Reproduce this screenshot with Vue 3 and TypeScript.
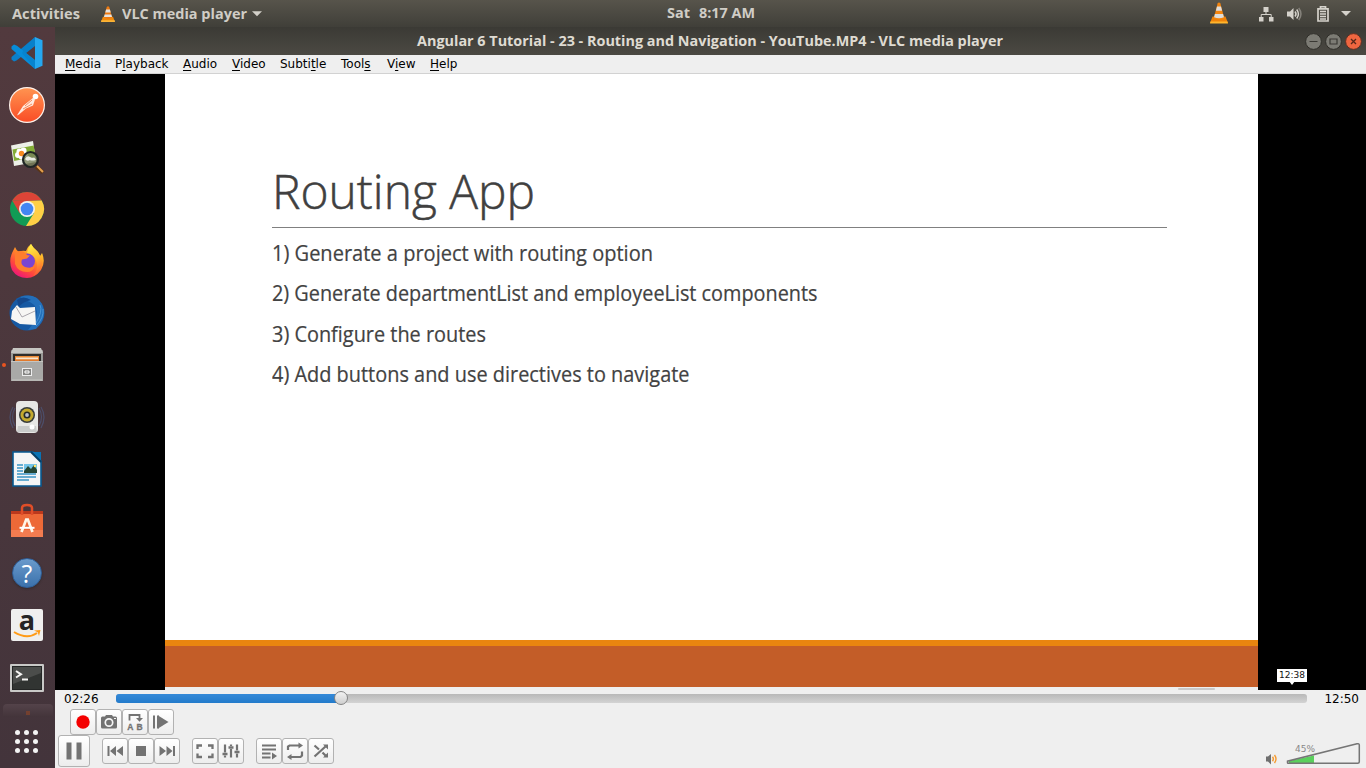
<script setup lang="ts">
interface MenuEntry { pre: string; key: string; post: string; width: number }

const menus: MenuEntry[] = [
  { pre: '', key: 'M', post: 'edia', width: 50 },
  { pre: 'P', key: 'l', post: 'ayback', width: 68 },
  { pre: '', key: 'A', post: 'udio', width: 49 },
  { pre: '', key: 'V', post: 'ideo', width: 48 },
  { pre: 'Subti', key: 't', post: 'le', width: 61 },
  { pre: 'Tool', key: 's', post: '', width: 46 },
  { pre: 'V', key: 'i', post: 'ew', width: 43 },
  { pre: '', key: 'H', post: 'elp', width: 40 },
]

const steps = [
  { text: '1) Generate a project with routing option', width: 381 },
  { text: '2) Generate departmentList and employeeList components', width: 545.5 },
  { text: '3) Configure the routes', width: 214 },
  { text: '4) Add buttons and use directives to navigate', width: 417.5 },
]

const progress = 18.9
const appDots = [0, 1, 2, 3, 4, 5, 6, 7, 8]
</script>

<template>
  <div class="desktop">
    <header class="topbar">
      <svg class="activities" width="70" height="27"><text x="0" y="19" textLength="68" lengthAdjust="spacingAndGlyphs">Activities</text></svg>
      <svg class="cone-small" viewBox="0 0 18 18" width="14" height="16" preserveAspectRatio="none">
        <path d="M2.5 12h13l2.3 5.5H.2z" fill="#f08a0c" /><path d="M.4 16h17.2l.4 2H0z" fill="#fbb436" />
        <path d="M7.4 1Q9-.5 10.6 1L14.4 13Q9 16 3.6 13z" fill="#ee7a10" />
        <path d="M6.5 4h5l1 3.2H5.5zM4.7 9.7h8.6l.9 2.7H3.8z" fill="#e4e2df" />
      </svg>
      <svg class="app-name" width="142" height="27"><text x="0" y="19" textLength="125" lengthAdjust="spacingAndGlyphs">VLC media player</text><path d="M130 11.3h10l-5 5z" fill="#d3d0c9" /></svg>
      <svg class="clock" width="90" height="27"><text x="0" y="18" textLength="23" lengthAdjust="spacingAndGlyphs">Sat</text><text x="32" y="18" textLength="56" lengthAdjust="spacingAndGlyphs">8:17 AM</text></svg>
      <svg class="tray-cone" viewBox="0 0 18 22" width="18" height="22">
        <path d="M2.5 14.5h13l2.5 6.5H0z" fill="#ef8209" /><path d="M.5 19.5h17l.5 2H0z" fill="#ffb52d" />
        <path d="M7.7 1Q9-.2 10.3 1L14.2 16Q9 19 3.8 16z" fill="#f5850f" />
        <path d="M7 4.5h4l1.1 4.2H5.900zM4.900 12h8.200l.8 3.200Q9 17.500 4.100 15.200z" fill="#dedddb" />
      </svg>
      <svg class="net" width="16" height="16" viewBox="0 0 16 16"><path d="M5.500 1h5v5h-5zM1 11h4.500v4.500H1zM11 11h4.500v4.500H11z" fill="#d5d2cb" /><path d="M8 6v2.500M3.200 11V8.500h10V11" fill="none" stroke="#d5d2cb" /></svg>
      <svg class="sound" width="17" height="16" viewBox="0 0 17 16"><path d="M1 5.500h3L7.500 2v12L4 10.500H1z" fill="#d5d2cb" /><path d="M9 5.500q2 2.500 0 5M10.700 3.500q3.500 4.500 0 9" fill="none" stroke="#d5d2cb" stroke-width="1.500" /><path d="M12.700 2q4.500 6 0 12" fill="none" stroke="#85827b" stroke-width="1.500" /></svg>
      <svg class="battery" width="12" height="16" viewBox="0 0 12 16"><path d="M3.500 2.500V.7h5v1.800M1 2.800h10V15H1z" fill="none" stroke="#d5d2cb" stroke-width="1.700" /><path d="M3 5.500h6M3 8h6M3 10.500h6M3 13h6" stroke="#d5d2cb" stroke-width="1.300" /></svg>
      <svg class="caret" width="10" height="5"><path d="M0 0h10L5 5z" fill="#d5d2cb" /></svg>
    </header>

    <div class="workspace">
      <nav class="dock">
        <div class="dock-item">
          <svg width="36" height="36" viewBox="0 0 36 36"><path d="M26 2v9L7.500 25.500 5 26.500l-2.500-2V22z" fill="#0a7fca" /><path d="M2.500 11.500L5 9.500l3 1.200L26 25v9L2.500 14z" fill="#078cd9" /><path d="M26 2l7.500 3.300v25.400L26 34V2z" fill="#25a8f0" /><path d="M26 10.500V2L17 11l-4 7 13 16v-8.500L16.500 18z" fill="#0780ca" opacity=".7" /></svg>
        </div>
        <div class="dock-item">
          <svg width="38" height="38" viewBox="0 0 38 38"><circle cx="19" cy="19" r="18" fill="#fff3ec" /><circle cx="19" cy="19" r="16.800" fill="url(#postman)" /><circle cx="27.500" cy="10.500" r="2.800" fill="#fff" /><path d="M25.500 11.500L15 20 9.800 28 9 29.500l2-1 7-6 7-3 2-6z" fill="#ffe9dd" /><path d="M17 20l7-6m-9 9l9-5" stroke="#f68a5c" fill="none" /><defs><linearGradient id="postman" x2="0" y2="1"><stop stop-color="#ff9350" /><stop offset="1" stop-color="#fa4d26" /></linearGradient></defs></svg>
        </div>
        <div class="dock-item">
          <svg width="36" height="36" viewBox="0 0 36 36"><path d="M2 6.500L24 2l3 21L5 27z" fill="#edf0e8" /><path d="M3.500 10.500L24.700 6.500l1.800 11L5.200 22z" fill="#83ac35" /><g fill="#fff"><circle cx="10.500" cy="12.500" r="3" /><circle cx="14.500" cy="11.500" r="3" /><circle cx="16" cy="15.500" r="3" /><circle cx="12.500" cy="17.500" r="3" /><circle cx="9" cy="16" r="3" /></g><circle cx="12.500" cy="14.500" r="2.700" fill="#f58b21" /><path d="M27 27.500l7 6" stroke="#5b3414" stroke-width="4" /><path d="M28 27l6 6" stroke="#e4a14f" stroke-width="2" /><circle cx="21.500" cy="20.500" r="7.500" fill="#77825b" fill-opacity=".8" stroke="#202624" stroke-width="2.200" /><path d="M16 20q2-4 5-2l2 1q3-1 4 2-5 1-6 0-3 2-5-1z" fill="#ebeee5" /></svg>
        </div>
        <div class="dock-item">
          <svg width="36" height="36" viewBox="0 0 36 36"><circle cx="18" cy="18" r="17" fill="#119b55" /><path d="M3.300 9.500A17 17 0 0 1 32.700 9.500L18 10z" fill="#dc4437" /><path d="M32.700 9.500A17 17 0 0 1 17 35l8-13-7-12z" fill="#ffcf46" /><path d="M3.300 9.500L10.500 22 18 18V9.500z" fill="#dc4437" /><circle cx="18" cy="18" r="8" fill="#f1f1ef" /><circle cx="18" cy="18" r="6.300" fill="#4286f3" /></svg>
        </div>
        <div class="dock-item">
          <svg width="36" height="36" viewBox="0 0 36 36"><defs><linearGradient id="fox" x1=".9" y1="0" x2=".3" y2="1"><stop stop-color="#fff136" /><stop offset=".4" stop-color="#ff9925" /><stop offset=".75" stop-color="#ff463d" /><stop offset="1" stop-color="#ed167b" /></linearGradient><linearGradient id="mane" x1=".3" y1="0" x2=".5" y2="1"><stop stop-color="#fff04a" /><stop offset=".5" stop-color="#ffb52c" /><stop offset="1" stop-color="#ff5a35" /></linearGradient></defs><path d="M4 8q1-2 2-4 1 3 4 5 3-2 7-1 1-4 5-7 2 4 4 5 4 3 5 7l2-3q4 9-1 17Q26 35 18 35 8 35 3 27-1 17 4 8z" fill="url(#fox)" /><circle cx="18.500" cy="18" r="7.500" fill="#7a45d0" /><path d="M6 9q8-3 11 2 1 1.500 4 1.500l-3 3-5 1q-2 5 3 7.500 6 2 10-1-2 6-8 6-9 0-12-8z" fill="#ff7d2d" /><path d="M22 1q3 5 6 7 4 4 5 12-1 9-9 13 5-6 4-12-1-6-5-9-3-2-5-2 1-5 4-9z" fill="url(#mane)" /></svg>
        </div>
        <div class="dock-item">
          <svg width="38" height="38" viewBox="0 0 38 38"><circle cx="19" cy="19" r="17.500" fill="#1659a3" /><path d="M12 3Q27-2 34 10q6 14-6 25l-8 1q8-9 9-18-1-9-12-12z" fill="#236fba" /><path d="M9 6q6-5 14 0-9 2-12 7z" fill="#14488c" /><path d="M4 17l5-6 3 3 15-1 1 18-16-1-9-5z" fill="#f6f6f4" /><path d="M8 13l6 10 13-6" fill="none" stroke="#aaa7ad" /><path d="M32 11q3 6-4 18m7-14q1 9-7 17" stroke="#5aa4de" fill="none" stroke-width=".7" /></svg>
        </div>
        <div class="dock-item">
          <i class="running-dot"></i>
          <svg width="36" height="36" viewBox="0 0 36 36"><rect x="2" y="3" width="32" height="31" rx="1" fill="#9b9b98" /><path d="M4 1h28l2 5H2z" fill="#c6c6c2" /><rect x="4" y="7" width="28" height="10" fill="#302e2b" /><path d="M6 9h24v6H6z" fill="#eb8a35" /><path d="M7 10.500h22v2H7z" fill="#f6e5cd" /><path d="M6 12.500h24v3H6z" fill="#e17a2d" /><rect x="2" y="14" width="32" height="20" fill="#a9a9a7" /><path d="M2 14.500h32M3 33h30" stroke="#c5c5c1" /><rect x="13.500" y="21.500" width="9" height="7" fill="#858583" stroke="#eee" /><path d="M16 24h4v2h-4z" fill="none" stroke="#fff" /></svg>
        </div>
        <div class="dock-item">
          <svg width="38" height="36" viewBox="0 0 38 36"><path d="M5 8q-6 10 0 21M33 8q6 10 0 21M7 9q-5 9 0 18m24-18q5 9 0 18" fill="none" stroke="#4e5e87" stroke-width="1.200" opacity=".6" /><rect x="8" y="2" width="22" height="32" rx="4" fill="#e7e7e5" /><path d="M10 27h18l1 6H9z" fill="#c9cbca" /><circle cx="19" cy="16" r="8" fill="#363b3a" /><circle cx="19" cy="16" r="6.500" fill="#c4a92e" /><circle cx="19" cy="16" r="3.500" fill="#252925" /><circle cx="19" cy="16" r="1.900" fill="#bcbfca" /><circle cx="24" cy="28" r="2.500" fill="#fff" /></svg>
        </div>
        <div class="dock-item">
          <svg width="36" height="38" viewBox="0 0 36 38"><path d="M4 2h20l8 9v25H4z" fill="#f4f5f5" stroke="#075a91" stroke-width="1.600" /><path d="M22 2h10v9z" fill="#0873b4" /><path d="M22 2l10 10" stroke="#053f67" stroke-width="2" /><path d="M8 15h6M8 18h6M8 21h6M8 24h19M8 27h19M8 30h12" stroke="#3995c5" stroke-width="1.600" /><path d="M15 14h13v9H15z" fill="#73c4e8" /><path d="M15 21l4-5 3 3 3-4 3 5v3H15z" fill="#244634" /><circle cx="26" cy="16" r="1.300" fill="#ffe465" /></svg>
        </div>
        <div class="dock-item">
          <svg width="36" height="36" viewBox="0 0 36 36"><path d="M2 8h32v26H2z" fill="#ed6937" /><path d="M2 8h32v3H2z" fill="#bc391d" /><path d="M2 27h32v7H2z" fill="#f37c50" /><path d="M13 12V5q0-3 5-3t5 3v7" fill="none" stroke="#e04e28" stroke-width="2.500" /><path d="M12.500 29L17.200 16.500h1.600L23.500 29" fill="none" stroke="#fff6e7" stroke-width="2.700" /><path d="M10.500 24.800h15" stroke="#fff" stroke-width="2" /></svg>
        </div>
        <div class="dock-item"><div class="help-ball">?</div></div>
        <div class="dock-item">
          <svg class="amazon" width="32" height="32" viewBox="0 0 32 32"><rect width="32" height="32" rx="2" fill="#efefee" /><text class="amazon-a" x="16" y="20.500" text-anchor="middle">a</text><path d="M3 23q13 8 23 1" fill="none" stroke="#ff9b16" stroke-width="2" /><path d="M23 21.500l6.500-.5-1.500 6-1.300-3.700z" fill="#ff9b16" /></svg>
        </div>
        <div class="dock-item">
          <svg class="terminal" width="36" height="32" viewBox="0 0 36 32"><rect x="1" y="2" width="34" height="28" rx="1" fill="#c9c9c7" /><rect x="3.500" y="4.500" width="29" height="23" fill="#313432" stroke="#242625" /><path d="M4 5h28v6L4 22z" fill="#606260" opacity=".55" /><path d="M7 9l5 3.300L7 15.500M13 17.500h6" fill="none" stroke="#f5f5f3" stroke-width="2" /></svg>
        </div>
        <div class="dock-peek"><i></i></div>
        <div class="app-grid"><i v-for="dot in appDots" :key="dot"></i></div>
      </nav>

      <main class="window">
        <div class="titlebar">
          <svg class="window-title" width="590" height="28"><text x="1" y="19" textLength="586" lengthAdjust="spacingAndGlyphs">Angular 6 Tutorial - 23 - Routing and Navigation - YouTube.MP4 - VLC media player</text></svg>
          <div class="window-buttons">
            <svg width="17" height="17" viewBox="0 0 17 17"><circle cx="8.500" cy="8.500" r="7.900" fill="#7c7b74" stroke="#302f2a" /><path d="M4.500 8.500h8" stroke="#3a3934" /></svg>
            <svg width="17" height="17" viewBox="0 0 17 17"><circle cx="8.500" cy="8.500" r="7.900" fill="#7c7b74" stroke="#302f2a" /><path d="M5 6h7v5H5z" fill="none" stroke="#3a3934" stroke-width="1.200" /></svg>
            <svg width="17" height="17" viewBox="0 0 17 17"><circle cx="8.500" cy="8.500" r="7.900" fill="#ef6640" stroke="#5c3024" /><path d="M6 6l5 5m0-5l-5 5" fill="none" stroke="#562719" stroke-width="1.300" /></svg>
          </div>
        </div>

        <div class="menubar">
          <span v-for="m in menus" :key="m.pre + m.key + m.post" :style="{ width: m.width + 'px' }">{{ m.pre }}<u>{{ m.key }}</u>{{ m.post }}</span>
        </div>

        <section class="video">
          <article class="slide">
            <svg class="slide-title" width="270" height="64"><text x="-1" y="48" textLength="263" lengthAdjust="spacingAndGlyphs">Routing App</text></svg>
            <hr class="rule">
            <div class="steps">
              <svg v-for="s in steps" :key="s.text" width="600" height="40.400"><text x="0" y="27" :textLength="s.width" lengthAdjust="spacingAndGlyphs">{{ s.text }}</text></svg>
            </div>
            <div class="slide-accent"></div>
            <div class="slide-base"></div>
            <div class="slide-edge"><i></i></div>
          </article>
          <div class="time-tip">12:38</div>
        </section>

        <footer class="controls">
          <div class="seek-row">
            <span class="elapsed">02:26</span>
            <div class="track"><div class="played" :style="{ width: progress + '%' }"></div><i class="knob" :style="{ left: progress + '%' }"></i></div>
            <span class="total">12:50</span>
          </div>
          <div class="advanced-row">
            <button><svg viewBox="0 0 26 26"><circle cx="13" cy="13" r="6.700" fill="#f40000" /></svg></button>
            <button><svg viewBox="0 0 26 26"><path d="M5 9q0-1.500 1.500-1.500H9L10 6h6l1 1.500h2.500Q21 7.500 21 9v9q0 1.500-1.500 1.500h-13Q5 19.500 5 18z" fill="#737373" /><circle cx="13" cy="13.500" r="3.700" fill="#737373" stroke="#f6f6f6" stroke-width="1.700" /><path d="M18 9h2v1h-2z" fill="#f6f6f6" /></svg></button>
            <button><svg viewBox="0 0 26 26"><path d="M7.500 11.500V6h10v4" fill="none" stroke="#737373" stroke-width="1.800" /><path d="M14 9h7l-3.500 3.800z" fill="#737373" /><text x="5.300" y="21" class="ab">A</text><text x="14.500" y="21" class="ab">B</text></svg></button>
            <button><svg viewBox="0 0 26 26"><path d="M5 6.500h2v13H5zM9 6.500h2v13H9z" fill="#737373" /><path d="M10 6.500l10.500 6.500L10 19.500z" fill="#737373" /></svg></button>
          </div>
          <div class="main-row">
            <button class="pause"><svg viewBox="0 0 32 32"><path d="M8.500 7.500h5v17h-5zM18.500 7.500h5v17h-5z" fill="#737373" /></svg></button>
            <div class="group">
              <button><svg viewBox="0 0 26 26"><path d="M5.500 8h2v10h-2zM14 8v10l-6-5zM21 8v10l-6.500-5z" fill="#737373" /></svg></button>
              <button><svg viewBox="0 0 26 26"><path d="M8 8h10v10H8z" fill="#737373" /></svg></button>
              <button><svg viewBox="0 0 26 26"><path d="M21 8h-2v10h2zM12.500 8v10l6-5zM5.500 8v10l6.500-5z" fill="#737373" /></svg></button>
            </div>
            <div class="group">
              <button><svg viewBox="0 0 26 26"><path d="M5.500 11V7.500H10M16 7.500h4.500V11M20.500 15.500V19H16M10 19H5.500v-3.500" fill="none" stroke="#737373" stroke-width="2.300" /></svg></button>
              <button><svg viewBox="0 0 26 26"><path d="M7 6.500v8m0 3v2M13 6.500v1.500m0 3v8.500M19 6.500v6m0 3v4" stroke="#737373" stroke-width="2.200" /><path d="M4.500 16h5M10.500 9.500h5M16.500 14h5" stroke="#737373" stroke-width="2.600" /></svg></button>
            </div>
            <div class="group">
              <button><svg viewBox="0 0 26 26"><path d="M6 7.500h14M6 11.500h14M6 15.500h8.500M6 19.500h8.500" stroke="#737373" stroke-width="2" /><path d="M16 14.500l5 3.500-5 3.500z" fill="#737373" /></svg></button>
              <button><svg viewBox="0 0 26 26"><path d="M6 12V8.500L7.500 7.500H18M20 13.500v4l-1.500 1.500H8" fill="none" stroke="#737373" stroke-width="2.200" /><path d="M16.500 4.500l4.500 3-4.500 3zM9.500 16L5 19l4.500 3z" fill="#737373" /></svg></button>
              <button><svg viewBox="0 0 26 26"><path d="M6.500 7.500l4.500 4M6.500 18.500l11-10M14.500 14.500l3.500 3.500" fill="none" stroke="#737373" stroke-width="2.200" /><path d="M15 6.500h5v5zM15 19.500h5v-5z" fill="#737373" /></svg></button>
            </div>
            <div class="volume">
              <svg class="speaker" width="14" height="14" viewBox="0 0 14 14"><path d="M1 4.500h2L6 2v10.500L3 9.500H1z" fill="#6f6f6f" /><path d="M7.500 4.800q1.800 2.200 0 4.500M9.500 3q3 4 0 8" fill="none" stroke="#f59b32" stroke-width="1.400" /></svg>
              <svg class="wedge" width="76" height="28" viewBox="0 0 76 28"><path d="M3 23L28 17.500V25H3z" fill="#5ad05c" /><path d="M1.500 24.800V23.200L71 5.800Q73.300 5.300 73.300 7v16.800q0 1.500-1.500 1.500H2Q1.500 25.300 1.500 24.800z" fill="none" stroke="#757575" stroke-width="1.500" /><text x="9" y="13.500">45%</text></svg>
            </div>
          </div>
        </footer>
      </main>
    </div>
  </div>
</template>

<style>
html, body { margin: 0; overflow: hidden; }
</style>

<style scoped>
.desktop { width: 1366px; height: 768px; display: flex; flex-direction: column; overflow: hidden; background: #efefef; font-family: "DejaVu Sans", sans-serif; }
svg { display: block; flex: none; }
.topbar { height: 27px; flex: none; display: flex; align-items: center; padding-right: 15px; background: linear-gradient(#57544b, #403f39); }
.topbar text, .window-title text { font: 700 14px "Open Sans", "Noto Sans", sans-serif; fill: #d0cdc6; }
.activities { margin-left: 12px; margin-right: 19px; }
.cone-small { margin-right: 7px; }
.clock { margin-left: 403px; }
.tray-cone { margin-left: 453px; margin-top: -1px; margin-right: 30px; }
.net { margin-right: 12px; }
.sound { margin-right: 14px; }
.battery { margin-right: 12px; }
.caret { margin-left: auto; }
.workspace { flex: 1; min-height: 0; display: flex; }
.dock { width: 55px; flex: none; display: flex; flex-direction: column; align-items: center; background: linear-gradient(#523a3e, #43343b); }
.dock-item { width: 55px; height: 52px; flex: none; display: flex; align-items: center; justify-content: center; position: relative; box-sizing: border-box; padding-right: 1px; }
.running-dot { position: absolute; left: 2px; top: 24px; width: 4px; height: 4px; border-radius: 50%; background: #e95420; }
.help-ball { width: 30px; height: 30px; border-radius: 50%; background: linear-gradient(#6a9bcc, #3b71ab); border: 1px solid #2f609a; box-sizing: border-box; color: #fff; font: 500 25px/28px "Open Sans", sans-serif; text-align: center; box-shadow: 0 1px 2px #2228; }
.amazon { overflow: visible; }
.amazon-a { font: bold 27px "Open Sans", sans-serif; fill: #252525; }
.terminal { margin-top: 2px; }
.dock-peek { width: 50px; height: 13px; margin-top: 1px; border-radius: 4px 4px 0 0; background: linear-gradient(#54434a, #43343a); display: flex; justify-content: center; align-items: flex-end; }
.dock-peek i { width: 4px; height: 4px; margin-bottom: 2px; background: #73402f; }
.app-grid { margin: 13px 2px 0 0; display: grid; grid-template-columns: repeat(3, 5px); gap: 4px; }
.app-grid i { width: 5px; height: 5px; border-radius: 50%; background: #f4f4f4; }
.window { flex: 1; min-width: 0; display: flex; flex-direction: column; }
.titlebar { height: 28px; flex: none; display: flex; background: linear-gradient(#3b3a35, #4b4943); }
.window-title { margin-left: 361px; }
.window-title text { fill: #dfdbd2; }
.window-buttons { margin: 6px 4px 0 auto; display: flex; gap: 3px; }
.menubar { height: 19px; box-sizing: border-box; flex: none; display: flex; padding-left: 10px; background: #efefef; border-bottom: 1px solid #d2d2d2; color: #000; font-size: 12px; line-height: 18px; }
.menubar u { text-decoration-thickness: 1px; text-underline-offset: 2px; text-decoration-skip-ink: none; }
.video { height: 616px; flex: none; position: relative; background: #000; display: flex; padding-left: 110px; box-sizing: border-box; }
.slide { width: 1093px; background: #fff; display: flex; flex-direction: column; }
.slide-title { margin: 87px 0 0 108px; overflow: visible; }
.slide-title text { font: 300 47.500px "Open Sans", sans-serif; fill: #404040; stroke: #404040; stroke-width: .5px; }
.rule { width: 895px; height: 1px; border: 0; background: #808080; margin: 2px 0 0 107px; }
.steps { margin: 6px 0 0 107px; }
.steps text { font: 400 21px "Open Sans", sans-serif; fill: #424242; stroke: #424242; stroke-width: .2px; }
.slide-accent { height: 6px; margin-top: auto; background: #e9850f; }
.slide-base { height: 41px; background: #c35d28; }
.slide-edge { height: 3px; background: #eee; display: flex; align-items: flex-end; }
.slide-edge i { width: 37px; height: 2px; margin-left: 1013px; border-radius: 2px; background: #c9c9c9; }
.time-tip { position: absolute; left: 1222px; top: 595px; width: 30px; height: 13px; background: #fff; color: #111; font-size: 9px; line-height: 12px; text-align: center; }
.time-tip::after { content: ""; position: absolute; left: 12px; top: 12px; border: 3px solid transparent; border-top: 4px solid #fff; border-bottom: 0; }
.controls { flex: 1; display: flex; flex-direction: column; background: #efefef; }
.seek-row { height: 19px; display: flex; padding: 0 7px 0 9px; font-size: 12px; line-height: 18px; color: #000; }
.elapsed { width: 52px; flex: none; }
.track { width: 1191px; height: 9px; margin-top: 4px; border-radius: 3px; background: linear-gradient(#b8b8b8, #d3d3d3); position: relative; }
.played { height: 100%; border-radius: 3px; background: linear-gradient(#3589d8, #237bcb); }
.knob { position: absolute; top: -3px; margin-left: -7px; width: 14px; height: 14px; box-sizing: border-box; border-radius: 50%; border: 1px solid #858585; background: linear-gradient(#f2f2f2, #cfcfcf); }
.total { margin-left: auto; }
.advanced-row { height: 26px; display: flex; padding-left: 15px; }
button { width: 26px; height: 26px; flex: none; box-sizing: border-box; padding: 0; border: 1px solid #b2b2b2; border-radius: 3px; background: linear-gradient(#fff, #ededed); display: block; }
button svg { width: 26px; height: 26px; margin: -1px; }
.ab { font: bold 8.500px "Liberation Sans", sans-serif; fill: #737373; stroke: #737373; stroke-width: .3px; }
.main-row { height: 33px; display: flex; padding-left: 3px; }
.pause { width: 32px; height: 32px; }
.pause svg { width: 32px; height: 32px; }
.group { display: flex; margin: 3px 0 0 12px; }
.volume { margin-left: auto; display: flex; padding-right: 4px; }
.speaker { margin: 17px 7px 0 0; }
.wedge text { font: 9px "DejaVu Sans", sans-serif; fill: #888; }
.wedge { margin-top: 3px; }
</style>
